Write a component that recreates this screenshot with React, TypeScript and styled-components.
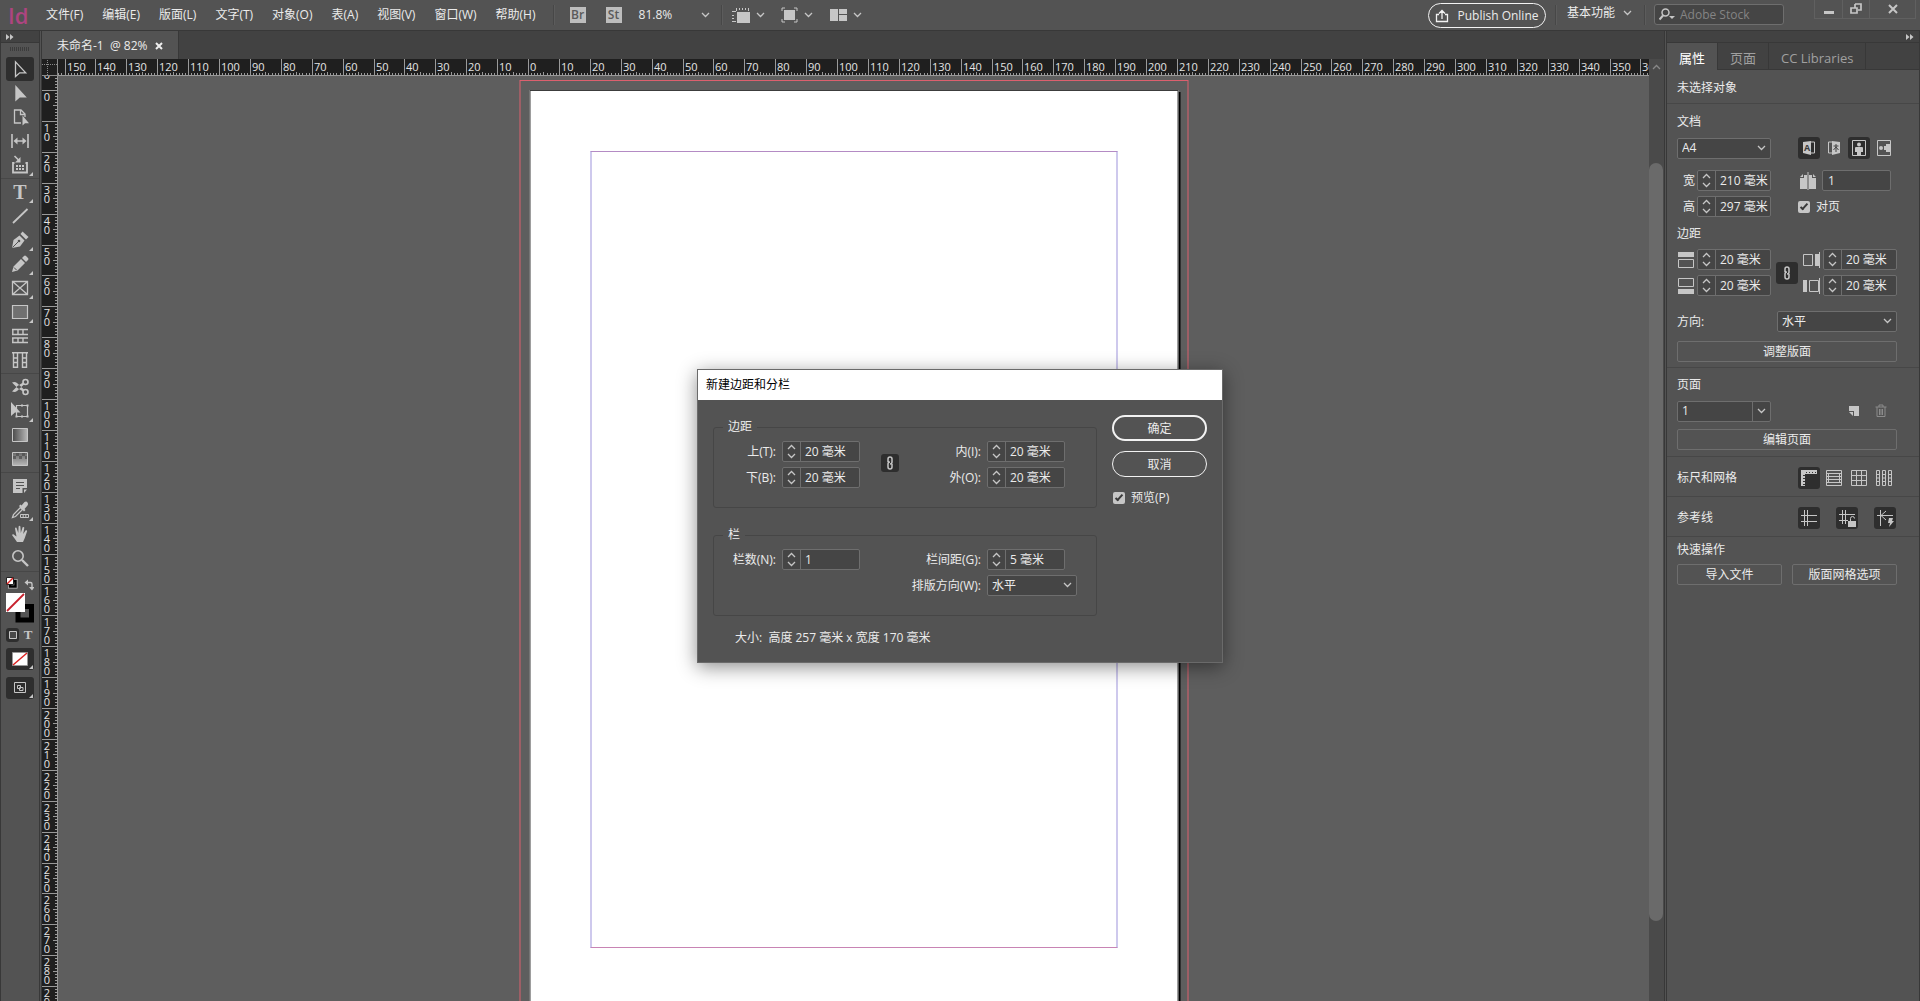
import React, { useLayoutEffect, useRef, useState } from 'react';
import styled, { createGlobalStyle, css } from 'styled-components';

const color = {
  bar: '#535353',
  dark: '#424242',
  line: '#474747',
  edge: '#383838',
  field: '#454545',
  border: '#6e6e6e',
  pressed: '#2e2e2e',
  icon: '#c6c6c6',
  text: '#ebebeb',
  ruler: '#1f1f1f',
  tick: '#9a9a9a',
};

const MM = 3.09;

const GlobalStyle = createGlobalStyle`
  *, *::before, *::after { box-sizing: border-box; }
  body {
    margin: 0;
    background: #5e5e5e;
    color: ${color.text};
    font: 12px/18px "Open Sans", "Noto Sans CJK SC", sans-serif;
  }
  button, input, select { font: inherit; color: inherit; margin: 0; }
  button { padding: 0; border: 0; background: none; }
  svg { display: block; flex: none; }
`;

const Frame = styled.div`
  display: flex;
  flex-direction: column;
  height: 100vh;
  overflow: hidden;
  position: relative;
`;

/* ---------- top bar ---------- */

const TopBar = styled.header`
  display: flex;
  align-items: center;
  height: 31px;
  flex: none;
  background: ${color.bar};
  border-bottom: 1px solid ${color.edge};
`;

const Logo = styled.span`
  width: 38px;
  padding-left: 8px;
  color: #ad4580;
  font-size: 22px;
  line-height: 28px;
  font-weight: 600;
`;

const Menu = styled.nav`
  display: flex;
  gap: 19px;
  padding: 0 17px 0 8px;
`;

const MenuButton = styled.button`
  white-space: nowrap;
`;

const Divider = styled.span`
  width: 1px;
  height: 20px;
  background: #474747;
  border-right: 1px solid #5c5c5c;
  box-sizing: content-box;
`;

const Tools = styled.div`
  display: flex;
  align-items: center;
  gap: 20px;
  padding: 0 11px 0 15px;
`;

const AppBadge = styled.button`
  width: 16px;
  height: 16px;
  background: #bdbdbd;
  color: #5a5a5a;
  font-weight: 600;
  line-height: 16px;
`;

const Zoom = styled.button`
  display: flex;
  align-items: center;
  gap: 29px;
  font-size: 12px;
  margin-left: -3px;
`;

const ViewTools = styled.div`
  display: flex;
  align-items: center;
  gap: 16px;
  padding-left: 8px;
`;

const ViewButton = styled.button`
  display: flex;
  align-items: center;
  gap: 6px;
`;

const BarEnd = styled.div`
  display: flex;
  align-items: center;
  margin-left: auto;
  height: 100%;
`;

const Publish = styled.button`
  display: flex;
  align-items: center;
  justify-content: center;
  gap: 8px;
  width: 118px;
  height: 25px;
  margin-right: 9px;
  padding-top: 2px;
  border: 1px solid #f2f2f2;
  border-radius: 13px;
`;

const Workspace = styled.button`
  display: flex;
  align-items: center;
  gap: 8px;
  padding: 0 12px 4px 10px;
`;

const Search = styled.label`
  display: flex;
  align-items: center;
  gap: 4px;
  width: 130px;
  height: 21px;
  margin: 0 30px 2px 8px;
  padding: 1px 4px 0;
  background: ${color.field};
  border: 1px solid ${color.border};
  border-radius: 3px;
  input {
    width: 80px;
    padding: 0;
    border: 0;
    background: none;
    outline: none;
  }
  input::placeholder { color: #848484; }
`;

const WindowButtons = styled.div`
  display: flex;
  align-self: flex-start;
  height: 19px;
  margin-right: 4px;
  border: 1px solid #606060;
  border-top: 0;
`;

const WindowButton = styled.button<{ $wide?: boolean }>`
  display: grid;
  place-items: center;
  width: ${(p) => (p.$wide ? 46 : 27)}px;
  & + & { border-left: 1px solid #606060; }
`;

/* ---------- work area ---------- */

const Body = styled.div`
  display: flex;
  flex: 1;
  min-height: 0;
`;

const ToolPanel = styled.aside`
  display: flex;
  flex-direction: column;
  align-items: stretch;
  width: 42px;
  flex: none;
  background: ${color.bar};
  border-left: 1px solid ${color.edge};
  border-right: 3px double ${color.edge};
`;

const Strip = styled.div<{ $end?: boolean }>`
  display: flex;
  align-items: center;
  justify-content: ${(p) => (p.$end ? 'flex-end' : 'flex-start')};
  height: 12px;
  flex: none;
  padding: 0 5px;
  background: ${color.dark};
  border-bottom: 1px solid ${color.edge};
`;

const Grip = styled.div`
  width: 20px;
  height: 4px;
  margin: 4px auto 6px;
  background: repeating-linear-gradient(90deg, #3c3c3c 0 1px, transparent 1px 2px);
`;

const ToolGroup = styled.div`
  display: flex;
  flex-direction: column;
  align-items: center;
  & + & {
    border-top: 1px solid ${color.line};
    margin-top: 1px;
    padding-top: 1px;
  }
`;

const pressed = css`
  background: ${color.pressed};
  border-radius: 3px;
`;

const ToolButton = styled.button<{ $on?: boolean; $more?: boolean }>`
  position: relative;
  display: grid;
  place-items: center;
  width: 28px;
  height: 24px;
  ${(p) => p.$on && pressed}
  ${(p) =>
    p.$more &&
    css`
      &::after {
        content: '';
        position: absolute;
        right: 1px;
        bottom: 1px;
        border: 2px solid transparent;
        border-right-color: ${color.icon};
        border-bottom-color: ${color.icon};
      }
    `}
`;

const Swatches = styled.div`
  display: flex;
  flex-direction: column;
  align-items: center;
  margin-top: 1px;
  padding-top: 5px;
  border-top: 1px solid ${color.line};
`;

const ModeRow = styled.div`
  display: flex;
  gap: 2px;
  width: 28px;
  margin: 5px 0 6px;
`;

const ModeButton = styled.button<{ $on?: boolean }>`
  display: grid;
  place-items: center;
  width: 14px;
  height: 14px;
  ${(p) => p.$on && pressed}
`;

const StackedTool = styled(ToolButton)`
  height: 22px;
  margin-bottom: 7px;
`;

const Center = styled.main`
  display: flex;
  flex-direction: column;
  flex: 1;
  min-width: 0;
`;

const TabBar = styled.div`
  display: flex;
  height: 28px;
  flex: none;
  background: ${color.dark};
`;

const DocTab = styled.div`
  display: flex;
  align-items: center;
  gap: 8px;
  padding: 1px 15px 0;
  background: ${color.bar};
  border-right: 1px solid ${color.edge};
  white-space: pre;
`;

const Workbench = styled.div`
  display: flex;
  flex: 1;
  min-height: 0;
`;

const RuledArea = styled.div`
  display: grid;
  grid-template: 17px minmax(0, 1fr) / 16px minmax(0, 1fr);
  flex: 1;
  min-width: 0;
`;

const RulerBox = styled.div`
  overflow: hidden;
  min-height: 0;
  background: ${color.ruler};
  svg { width: 100%; height: 100%; }
  text { fill: #e4e4e4; font-size: 11px; }
`;

const Pasteboard = styled.div`
  position: relative;
  overflow: hidden;
  background: #5e5e5e;
`;

const Bleed = styled.div`
  position: absolute;
  left: 50%;
  top: 4px;
  width: 669px;
  height: 939px;
  transform: translateX(-50%);
  padding: 9px;
  border: 1px solid #dc606e;
`;

const Page = styled.div`
  height: 100%;
  padding: 60px;
  background: #fff;
  border: 1px solid #3c3c3c;
  box-shadow: 2px 2px 0 #000;
`;

const Margins = styled.div`
  height: 100%;
  border: 1px solid #9d94dc;
  border-top-color: #b48bc4;
  border-bottom-color: #c884b4;
`;

const ScrollTrack = styled.div`
  display: flex;
  flex-direction: column;
  width: 15px;
  flex: none;
  background: #4a4a4a;
`;

const ScrollArrow = styled.button`
  display: grid;
  place-items: center;
  height: 16px;
  opacity: 0.5;
`;

const ScrollSpace = styled.div<{ $share: number }>`
  flex: ${(p) => p.$share};
`;

const ScrollThumb = styled(ScrollSpace)`
  width: 14px;
  background: #6a6a6a;
  border-radius: 7px;
`;

/* ---------- form parts ---------- */

const fieldBox = css`
  height: 21px;
  background: ${color.field};
  border: 1px solid ${color.border};
  border-radius: 2px;
`;

const SpinBox = styled.span<{ $width: number }>`
  display: flex;
  width: ${(p) => p.$width}px;
  ${fieldBox}
  input {
    flex: 1;
    min-width: 0;
    padding: 0 0 0 4px;
    border: 0;
    background: none;
    outline: none;
  }
`;

const SpinArrows = styled.span`
  display: flex;
  flex-direction: column;
  width: 18px;
  border-right: 1px solid ${color.border};
  button {
    display: grid;
    place-items: center;
    flex: 1;
  }
`;

const TextInput = styled.input`
  ${fieldBox}
  width: 69px;
  padding: 0 5px;
`;

const SelectBox = styled.span<{ $width: number; $split?: boolean }>`
  position: relative;
  display: block;
  width: ${(p) => p.$width}px;
  select {
    ${fieldBox}
    display: block;
    width: 100%;
    padding: 0 4px;
    appearance: none;
    outline: none;
  }
  svg {
    position: absolute;
    right: 5px;
    top: 7px;
    pointer-events: none;
  }
  ${(p) =>
    p.$split &&
    css`
      &::after {
        content: '';
        position: absolute;
        top: 1px;
        bottom: 1px;
        right: 18px;
        border-left: 1px solid ${color.border};
      }
    `}
`;

const CheckLabel = styled.label`
  display: flex;
  align-items: center;
  gap: 6px;
  input {
    appearance: none;
    display: grid;
    place-items: center;
    width: 12px;
    height: 12px;
    background: ${color.icon};
    border-radius: 2px;
  }
  input:checked::after {
    content: '';
    width: 4px;
    height: 8px;
    margin-bottom: 2px;
    border: solid #3a3a3a;
    border-width: 0 2px 2px 0;
    transform: rotate(42deg);
  }
`;

const PanelButton = styled.button`
  flex: 1;
  height: 21px;
  border: 1px solid ${color.border};
  border-radius: 2px;
`;

const Toggle = styled.button<{ $on?: boolean; $small?: boolean }>`
  display: grid;
  place-items: center;
  width: ${(p) => (p.$small ? 18 : 22)}px;
  height: ${(p) => (p.$small ? 18 : 22)}px;
  ${(p) => p.$on && pressed}
`;

/* ---------- properties panel ---------- */

const SidePanel = styled.aside`
  width: 256px;
  flex: none;
  background: ${color.bar};
  border-left: 3px double ${color.edge};
  border-right: 1px solid ${color.edge};
`;

const PanelTabs = styled.div`
  display: flex;
  height: 27px;
  background: ${color.dark};
  box-shadow: inset 0 -1px ${color.edge};
`;

const PanelTab = styled.button<{ $on?: boolean }>`
  padding: 2px 12px 0;
  font-size: 13px;
  border-right: 1px solid ${color.edge};
  color: ${(p) => (p.$on ? '#fff' : '#a0a0a0')};
  background: ${(p) => (p.$on ? color.bar : 'transparent')};
`;

const Section = styled.section<{ $top: number; $bottom: number }>`
  display: flex;
  flex-direction: column;
  padding: ${(p) => p.$top}px 22px ${(p) => p.$bottom}px 10px;
  border-bottom: 1px solid ${color.line};
  &:last-child { border-bottom: 0; }
`;

const Heading = styled.h2`
  margin: 0;
  font-size: 12px;
  font-weight: 400;
  line-height: 18px;
`;

const Row = styled.div<{ $top?: number; $gap?: number }>`
  display: flex;
  align-items: center;
  justify-content: space-between;
  gap: ${(p) => p.$gap ?? 0}px;
  min-height: 21px;
  margin-top: ${(p) => p.$top ?? 0}px;
`;

const ToggleRow = styled(Row)`
  height: 22px;
`;

const Pair = styled.div`
  display: flex;
  align-items: center;
  justify-content: space-between;
  width: 94px;
`;

const Rest = styled.div<{ $gap: number }>`
  display: flex;
  align-items: center;
  gap: ${(p) => p.$gap}px;
  width: 99px;
`;

const RowLabel = styled.label`
  padding-left: 6px;
`;

const Stack = styled.div`
  display: flex;
  flex-direction: column;
  gap: 5px;
`;

/* ---------- dialog ---------- */

const Overlay = styled.div`
  position: absolute;
  inset: 31px 0 0;
  display: grid;
  place-items: center;
`;

const Dialog = styled.form`
  width: 526px;
  background: ${color.bar};
  border: 1px solid #6a6a6a;
  box-shadow: 0 4px 18px rgba(0, 0, 0, 0.45);
`;

const DialogTitle = styled.h1`
  margin: 0;
  height: 30px;
  padding-left: 8px;
  background: #fff;
  color: #000;
  font-size: 12px;
  font-weight: 400;
  line-height: 30px;
`;

const DialogBody = styled.div`
  display: flex;
  gap: 15px;
  padding: 18px 15px 15px;
`;

const DialogFields = styled.div`
  display: flex;
  flex-direction: column;
  gap: 18px;
  flex: 1;
`;

const Group = styled.fieldset`
  margin: 0;
  padding: 5px 19px 19px 0;
  min-height: 90px;
  border: 1px solid #464646;
  border-radius: 3px;
  legend {
    height: 18px;
    margin-left: 9px;
    padding: 0 5px;
  }
`;

const GroupGrid = styled.div`
  display: grid;
  grid-template-columns: 62px 78px 34px 75px 90px;
  column-gap: 6px;
  row-gap: 5px;
  align-items: center;
  > label { justify-self: end; white-space: nowrap; }
`;

const LinkCell = styled.div<{ $rows: number }>`
  grid-row: span ${(p) => p.$rows};
  justify-self: end;
  padding: 0 1px 4px 0;
`;

const Blank = styled.span`
  grid-column: span 3;
`;

const SizeNote = styled.p`
  margin: -5px 0 0 22px;
  white-space: pre;
`;

const DialogActions = styled.div`
  display: flex;
  flex-direction: column;
  gap: 10px;
  width: 95px;
  margin-top: -3px;
  label { padding: 2px 0 0 1px; }
`;

const PillButton = styled.button<{ $primary?: boolean }>`
  height: 26px;
  padding-top: 2px;
  line-height: 20px;
  border: ${(p) => (p.$primary ? 2 : 1)}px solid #f2f2f2;
  border-radius: 13px;
`;

/* ---------- drawings ---------- */

type GlyphProps = { w?: number; h?: number; children: React.ReactNode };

const Glyph = ({ w = 24, h = 24, children }: GlyphProps) => (
  <svg width={w} height={h} viewBox={`0 0 ${w} ${h}`} fill={color.icon} aria-hidden="true">
    {children}
  </svg>
);

const line = { fill: 'none', stroke: color.icon };

const Chevron = ({ up }: { up?: boolean }) => (
  <Glyph w={9} h={6}>
    <path d={up ? 'M1 5l3.5-3.5L8 5' : 'M1 1l3.5 3.5L8 1'} {...line} strokeWidth="1.3" />
  </Glyph>
);

const Chain = () => (
  <Glyph w={10} h={16}>
    <path d="M3 7V4a2 2 0 0 1 4 0v3a2 2 0 0 1-2 2M7 9v3a2 2 0 0 1-4 0V9a2 2 0 0 1 2-2" {...line} strokeWidth="1.5" />
  </Glyph>
);

const DoubleArrow = () => (
  <Glyph w={8} h={6}>
    <path d="M0 0l3.5 3L0 6zM4 0l3.5 3L4 6z" />
  </Glyph>
);

type Tool = { name: string; on?: boolean; more?: boolean; art: React.ReactNode };

const toolGroups: Tool[][] = [
  [
    { name: '选择工具', on: true, art: <path d="M7.5 4.8v14.8l4.2-3.8h6z" {...line} strokeWidth="1.3" /> },
    { name: '直接选择工具', art: <path d="M7.3 4v16.4l4.5-4h7z" /> },
    {
      name: '页面工具',
      art: (
        <>
          <path d="M13 18H6.5V5H13l4 4v3M12.500 5v4.500H17" {...line} strokeWidth="1.3" />
          <path d="M14.500 10.500v10l2.500-2.300h4z" />
        </>
      ),
    },
    {
      name: '间隙工具',
      art: (
        <>
          <path d="M4 5v14M20 5v14" {...line} strokeWidth="1.600" />
          <path d="M7 12h10" {...line} strokeWidth="1.500" />
          <path d="M5.500 12l4-3.500v7zM18.500 12l-4-3.500v7z" />
        </>
      ),
    },
    {
      name: '内容收集器工具',
      more: true,
      art: (
        <>
          <path d="M6.500 10H5v9.500h14V10h-1.500" {...line} strokeWidth="1.800" />
          <path d="M8 12h2v2H8zm3 0h2v2h-2zm3 0h2v2h-2zM8 15h2v2H8zm3 0h2v2h-2zm3 0h2v2h-2z" />
          <path d="M6.500 3l4 4" {...line} strokeWidth="1.600" />
          <path d="M12.500 9.500H7l5.500-5.500z" />
        </>
      ),
    },
  ],
  [
    {
      name: '文字工具',
      more: true,
      art: (
        <text x="12" y="18.500" textAnchor="middle" fontFamily="Liberation Serif, serif" fontWeight="700" fontSize="20">
          T
        </text>
      ),
    },
    { name: '直线工具', art: <path d="M5 19L19.500 5" {...line} strokeWidth="1.800" /> },
    {
      name: '钢笔工具',
      more: true,
      art: (
        <>
          <path d="M4 20l1.500-8 6-4.500 5 5-4.500 6z" />
          <path d="M12.500 6l2-2.500 6 5.500-2.500 2.500z" />
          <path d="M4.500 19.500l6-6" stroke={color.bar} strokeWidth="1" />
          <circle cx="11" cy="13" r="1.300" fill={color.bar} />
        </>
      ),
    },
    {
      name: '铅笔工具',
      more: true,
      art: (
        <>
          <path d="M4 20l1.500-5.500L13 7l4 4-7.500 7.500zM14 6l2-2q1-1 2 0l2 2q1 1 0 2l-2 2z" />
          <path d="M6 15.500l2.500 2.500" stroke={color.bar} strokeWidth="1" />
        </>
      ),
    },
    { name: '矩形框架工具', more: true, art: <path d="M4.500 5.500h15v13h-15zl15 13m0-13l-15 13" {...line} strokeWidth="1.300" /> },
    { name: '矩形工具', more: true, art: <path d="M4.500 5.500h15v13h-15z" {...line} fill="#707070" strokeWidth="1.200" /> },
    {
      name: '水平网格工具',
      art: <path d="M4 5.500h16M4 10.500h16M4 14h16M4 18.500h16M4.800 5v6M10 5v6M15 5v6M4.800 14v5M10 14v5M15 14v5" {...line} strokeWidth="1.400" />,
    },
    {
      name: '垂直网格工具',
      art: <path d="M4 4.800h16M5.500 4v16M9.500 4v16M14.500 4v16M18.500 4v16M5.500 10h4M5.500 14.500h4M5.500 19.300h4M14.500 10h4M14.500 14.500h4M14.500 19.300h4" {...line} strokeWidth="1.400" />,
    },
  ],
  [
    {
      name: '剪刀工具',
      art: (
        <>
          <circle cx="17.500" cy="7" r="2.500" {...line} strokeWidth="1.600" />
          <circle cx="17.500" cy="17" r="2.500" {...line} strokeWidth="1.600" />
          <path d="M4 7.500q3-1 5 .5l7 6.500-1 2L9.500 13zM4 16.500q3 1 5-.5l7-6.500-1-2L9.500 11z" />
        </>
      ),
    },
    {
      name: '自由变换工具',
      more: true,
      art: (
        <>
          <path d="M8.500 6.500h11v11h-11z" {...line} strokeWidth="1.200" />
          <path d="M18.500 5.500h2v2h-2zM18.500 16.500h2v2h-2zM7.500 16.500h2v2h-2zM13 5.500h2v2h-2zM13 16.500h2v2h-2z" />
          <path d="M3 3v14l4-3.500h5.500z" />
        </>
      ),
    },
    { name: '渐变色板工具', art: <path d="M4.500 5.500h15v13h-15z" fill="url(#swatch)" stroke={color.icon} /> },
    {
      name: '渐变羽化工具',
      art: (
        <>
          <path d="M4.500 5.500h15v13h-15z" fill="url(#feather)" stroke={color.icon} />
          <path d="M8 6h3v3H8zm6 0h3v3h-3zM5 9h3v3H5zm6 0h3v3h-3zm6 0h2v3h-2z" fill="#4c4c4c" opacity=".7" />
        </>
      ),
    },
  ],
  [
    {
      name: '附注工具',
      art: (
        <>
          <path d="M5 5h14v9h-4.500v5H5zM16 15.500h3l-3 3.500z" />
          <path d="M8 8.500h8M8 11.500h8M8 14.500h4" stroke={color.bar} strokeWidth="1.200" />
        </>
      ),
    },
    {
      name: '颜色主题工具',
      more: true,
      art: (
        <>
          <path d="M4.500 19.500l1-3 7-7 2 2-7 7z" {...line} strokeWidth="1.300" />
          <path d="M11 8l1.500-1.500 1 1L16.500 4q2-1 3 .5t0 3L16.500 11l1 1L16 13.500z" />
          <path d="M12.500 16.500h8v3h-8zm2.700 0v3m2.600-3v3" {...line} strokeWidth="1" />
        </>
      ),
    },
    {
      name: '抓手工具',
      art: <path d="M9 20q-2-3-5-7 1-1.500 3 .5l1.500 1L7 6.500q.2-1.500 1.500-.8L10.300 11l.3-6.500q1-1.500 1.800 0l.4 6.500 1.800-5.700q1.400-1 1.700.5L15.200 12l2.500-3.700q1.500-.6 1.400.9L16.800 16 15 20z" />,
    },
    {
      name: '缩放显示工具',
      art: (
        <>
          <circle cx="10" cy="10" r="5.200" {...line} strokeWidth="1.600" />
          <path d="M14 14l6 6" {...line} strokeWidth="2.400" />
        </>
      ),
    },
  ],
];

const span = (from: number, to: number) =>
  Array.from({ length: Math.max(0, to - from + 1) }, (_, i) => from + i);

const tickLength = (mm: number, full: number, half: number, short: number) =>
  mm % 10 === 0 ? full : mm % 5 === 0 ? half : short;

/* Rulers only draw the millimetres that are in view. */
const useLength = (axis: 'clientWidth' | 'clientHeight') => {
  const ref = useRef<HTMLDivElement>(null);
  const [length, setLength] = useState(0);
  useLayoutEffect(() => {
    const measure = () => setLength(ref.current ? ref.current[axis] : 0);
    measure();
    window.addEventListener('resize', measure);
    return () => window.removeEventListener('resize', measure);
  }, [axis]);
  return [ref, length] as const;
};

const HorizontalRuler = () => {
  const [ref, width] = useLength('clientWidth');
  const origin = Math.floor(width / 2 - 325);
  const first = Math.ceil(-origin / MM);
  const last = Math.floor((width - origin) / MM);
  return (
    <RulerBox ref={ref}>
      <svg shapeRendering="crispEdges">
        {span(first, last).map((mm) => {
          const len = tickLength(mm, 17, 4, 3);
          return <rect key={mm} x={origin + Math.round(mm * MM)} y={17 - len} width="1" height={len} fill={color.tick} />;
        })}
        {span(Math.ceil(first / 10), Math.floor(last / 10)).map((n) => (
          <text key={n} x={origin + Math.round(n * 10 * MM) + 2} y="12">
            {Math.abs(n * 10)}
          </text>
        ))}
        <rect y="16" width="100%" height="1" fill={color.tick} />
      </svg>
    </RulerBox>
  );
};

const VerticalRuler = () => {
  const [ref, height] = useLength('clientHeight');
  const origin = 14;
  const last = Math.floor((height - origin) / MM);
  return (
    <RulerBox ref={ref}>
      <svg shapeRendering="crispEdges">
        {span(-4, last).map((mm) => {
          const len = tickLength(mm, 16, 5, 3);
          return <rect key={mm} x={16 - len} y={origin + Math.round(mm * MM)} width={len} height="1" fill={color.tick} />;
        })}
        {span(-1, Math.floor(last / 10)).map((n) => (
          <text key={n} textAnchor="middle" y={origin + Math.round(n * 10 * MM) + 11}>
            {String(Math.abs(n * 10))
              .split('')
              .map((digit, i) => (
                <tspan key={i} x="5" dy={i ? 9 : 0}>
                  {digit}
                </tspan>
              ))}
          </text>
        ))}
        <rect x="15" width="1" height="100%" fill={color.tick} />
      </svg>
    </RulerBox>
  );
};

/* ---------- reusable controls ---------- */

const Spin = ({ id, value, width, name }: { id: string; value: string; width: number; name?: string }) => (
  <SpinBox $width={width}>
    <SpinArrows>
      <button type="button" aria-label="增加"><Chevron up /></button>
      <button type="button" aria-label="减少"><Chevron /></button>
    </SpinArrows>
    <input id={id} defaultValue={value} aria-label={name} />
  </SpinBox>
);

const Select = ({ id, value, width, name, split }: { id: string; value: string; width: number; name?: string; split?: boolean }) => (
  <SelectBox $width={width} $split={split}>
    <select id={id} defaultValue={value} aria-label={name}>
      <option>{value}</option>
    </select>
    <Chevron />
  </SelectBox>
);

const MarginField = ({ id, name, art }: { id: string; name: string; art: React.ReactNode }) => (
  <Pair>
    <label htmlFor={id} aria-label={name}>
      <Glyph w={18} h={18}>{art}</Glyph>
    </label>
    <Spin id={id} value="20 毫米" width={74} />
  </Pair>
);

const menus = ['文件(F)', '编辑(E)', '版面(L)', '文字(T)', '对象(O)', '表(A)', '视图(V)', '窗口(W)', '帮助(H)'];

const MenuBar = () => (
  <TopBar>
    <Logo>Id</Logo>
    <Menu>
      {menus.map((m) => (
        <MenuButton key={m}>{m}</MenuButton>
      ))}
    </Menu>
    <Divider />
    <Tools>
      <AppBadge>Br</AppBadge>
      <AppBadge>St</AppBadge>
      <Zoom>81.8% <Chevron /></Zoom>
    </Tools>
    <Divider />
    <ViewTools>
      <ViewButton aria-label="视图选项">
        <Glyph w={19} h={16}>
          <path d="M6 5h13v11H6zM5 1h1v3H5zm3 0h1v2H8zm3 0h1v2h-1zm3 0h1v2h-1zm3 0h1v3h-1zM1 4h4v1H1zm0 4h2v1H1zm0 3h2v1H1zm0 3h4v1H1z" />
        </Glyph>
        <Chevron />
      </ViewButton>
      <ViewButton aria-label="屏幕模式">
        <Glyph w={17} h={16}>
          <path d="M3 3h11v10H3z" />
          <path d="M1 4V1h3M13 1h3v3M16 12v3h-3M4 15H1v-3" {...line} />
        </Glyph>
        <Chevron />
      </ViewButton>
      <ViewButton aria-label="排列文档">
        <Glyph w={18} h={14}>
          <path d="M1 1h8v12H1zM10 1h8v5h-8zM10 7h8v6h-8z" />
        </Glyph>
        <Chevron />
      </ViewButton>
    </ViewTools>
    <BarEnd>
      <Publish>
        <Glyph w={14} h={14}>
          <path d="M4 5.500H1.500v7h11v-7H10M7 10V2M4 4.500l3-3 3 3" {...line} stroke="#f2f2f2" strokeWidth="1.300" />
        </Glyph>
        Publish Online
      </Publish>
      <Divider />
      <Workspace>基本功能 <Chevron /></Workspace>
      <Divider />
      <Search>
        <Glyph w={17} h={14}>
          <circle cx="6.500" cy="4.500" r="3.500" {...line} strokeWidth="1.500" />
          <path d="M4 7.500L.5 11.500" {...line} strokeWidth="2" />
          <path d="M10 8h6l-3 3z" />
        </Glyph>
        <input placeholder="Adobe Stock" aria-label="Adobe Stock" />
      </Search>
      <WindowButtons>
        <WindowButton aria-label="最小化">
          <Glyph w={12} h={12}><path d="M1 8h10v3H1z" /></Glyph>
        </WindowButton>
        <WindowButton aria-label="还原">
          <Glyph w={12} h={12}><path d="M5 1h6v6H8M1 5h6v5H1zM5 1v4" {...line} strokeWidth="1.700" /></Glyph>
        </WindowButton>
        <WindowButton aria-label="关闭" $wide>
          <Glyph w={10} h={10}><path d="M1 1l8 8M9 1L1 9" {...line} strokeWidth="2" /></Glyph>
        </WindowButton>
      </WindowButtons>
    </BarEnd>
  </TopBar>
);

const Toolbox = () => (
  <ToolPanel>
    <Strip><DoubleArrow /></Strip>
    <Grip />
    {toolGroups.map((group) => (
      <ToolGroup key={group[0].name}>
        {group.map((t) => (
          <ToolButton key={t.name} aria-label={t.name} $on={t.on} $more={t.more}>
            <Glyph>
              <defs>
                <linearGradient id="swatch"><stop stopColor="#4a4a4a" /><stop offset="1" stopColor="#b8b8b8" /></linearGradient>
                <linearGradient id="feather" x2="0" y2="1"><stop stopColor="#666" /><stop offset="1" stopColor="#b8b8b8" /></linearGradient>
              </defs>
              {t.art}
            </Glyph>
          </ToolButton>
        ))}
      </ToolGroup>
    ))}
    <Swatches>
      <Glyph w={28} h={46}>
        <path d="M4 4h5.500v5.500H4z" fill="none" stroke={color.icon} strokeWidth="4" />
        <path d="M4 4h5.500v5.500H4z" fill="none" stroke="#000" strokeWidth="2.500" />
        <path d="M.5.500h7v7h-7z" fill="#fff" stroke="#222" />
        <path d="M1 7l6-6" stroke="#d22" strokeWidth="1.500" />
        <path d="M21 5.500h3.500q1.500 0 1.500 1.500V11" {...line} strokeWidth="1.400" />
        <path d="M22 2.500v6l-3.500-3zM23 10h5.500L26 13.500z" />
        <path d="M12 29.500h13.500V43H12z" fill="none" stroke="#000" strokeWidth="5" />
        <path d="M0 16h19v19H0z" fill="#fff" />
        <path d="M1 34l17-17" stroke="#c8202c" strokeWidth="1.800" />
      </Glyph>
      <ModeRow>
        <ModeButton $on aria-label="格式针对容器">
          <Glyph w={10} h={10}><path d="M1.500 1.500h7v7h-7z" {...line} fill="#4a4a4a" /></Glyph>
        </ModeButton>
        <ModeButton aria-label="格式针对文本">
          <Glyph w={12} h={12}>
            <text x="6" y="10" textAnchor="middle" fontFamily="Liberation Serif, serif" fontWeight="700" fontSize="13">T</text>
          </Glyph>
        </ModeButton>
      </ModeRow>
      <StackedTool $on $more aria-label="应用无">
        <Glyph w={16} h={14}>
          <path d="M.5.500h15v13H.5z" fill="#fff" stroke="#999" />
          <path d="M1 13L15 1" stroke="#d22" strokeWidth="1.500" />
        </Glyph>
      </StackedTool>
      <StackedTool $on $more aria-label="屏幕模式">
        <Glyph w={12} h={12}>
          <path d="M.5.500h11v10H.5zM3.500 3.500h3v3h-3zM5.500 5.500h3.500v3H5.500z" {...line} />
        </Glyph>
      </StackedTool>
    </Swatches>
  </ToolPanel>
);

const Properties = () => (
  <SidePanel>
    <Strip $end><DoubleArrow /></Strip>
    <PanelTabs>
      <PanelTab $on>属性</PanelTab>
      <PanelTab>页面</PanelTab>
      <PanelTab>CC Libraries</PanelTab>
    </PanelTabs>
    <Section $top={9} $bottom={6}>
      <Heading>未选择对象</Heading>
    </Section>
    <Section $top={9} $bottom={5}>
      <Heading>文档</Heading>
      <Row $top={6}>
        <Select id="preset" name="页面大小" value="A4" width={94} />
        <Rest $gap={3}>
          <Toggle $on aria-label="从左到右">
            <Glyph w={14} h={16}>
              <path d="M1 2l8-1v14l-8-2z" />
              <path d="M9 2h3.500v11H9" {...line} />
              <text x="5" y="11" textAnchor="middle" fontSize="9" fontWeight="700" fill="#3a3a3a">A</text>
            </Glyph>
          </Toggle>
          <Toggle aria-label="从右到左">
            <Glyph w={14} h={16}>
              <path d="M13 2L5 1v14l8-2z" />
              <path d="M5 2H1.500v11H5" {...line} />
              <path d="M9 4v8M6.500 6h5M9 7l-2.500 3M9 7l2.500 3" stroke="#444" fill="none" />
            </Glyph>
          </Toggle>
          <Toggle $on aria-label="纵向">
            <Glyph w={14} h={16}>
              <path d="M.5.500h13v15H.5z" {...line} />
              <circle cx="7" cy="4.500" r="2" />
              <path d="M3 8q0-1 1-1h6q1 0 1 1v4H9v3H5v-3H3z" />
            </Glyph>
          </Toggle>
          <Toggle aria-label="横向">
            <Glyph w={14} h={16}>
              <path d="M.5.500h13v15H.5z" {...line} />
              <circle cx="4" cy="8" r="2" />
              <path d="M13 4H9v2H7v4h2v2h4z" />
            </Glyph>
          </Toggle>
        </Rest>
      </Row>
      <Row $top={11}>
        <Pair>
          <RowLabel htmlFor="width">宽</RowLabel>
          <Spin id="width" value="210 毫米" width={74} />
        </Pair>
        <Rest $gap={5}>
          <Glyph w={19} h={18}>
            <path d="M2 6h4v-3h3v14H2zM11 3h3v3h4v11h-7zM2 5l3-3v3zM18 5l-3-3v3z" />
            <path d="M10 0v18" {...line} />
          </Glyph>
          <TextInput defaultValue="1" aria-label="页数" />
        </Rest>
      </Row>
      <Row $top={5}>
        <Pair>
          <RowLabel htmlFor="height">高</RowLabel>
          <Spin id="height" value="297 毫米" width={74} />
        </Pair>
        <Rest $gap={0}>
          <CheckLabel><input type="checkbox" defaultChecked />对页</CheckLabel>
        </Rest>
      </Row>
      <Row $top={6}><Heading>边距</Heading></Row>
      <Row $top={5} $gap={5}>
        <Stack>
          <MarginField id="m-top" name="上边距" art={<><path d="M1 1h16v5H1z" /><path d="M1.500 8.500h15v8h-15z" {...line} /></>} />
          <MarginField id="m-bottom" name="下边距" art={<><path d="M1 12h16v5H1z" /><path d="M1.500 1.500h15v8h-15z" {...line} /></>} />
        </Stack>
        <Toggle $on aria-label="将所有设置设为相同"><Chain /></Toggle>
        <Stack>
          <MarginField id="m-in" name="内边距" art={<><path d="M12 3h4v12h-4z" /><path d="M.5 3.500h9v11h-9zM16.500 1v16" {...line} /></>} />
          <MarginField id="m-out" name="外边距" art={<><path d="M0 3h4v12H0z" /><path d="M6.500 3.500h9v11h-9zM16.500 1v16" {...line} /></>} />
        </Stack>
      </Row>
      <Row $top={15}>
        <label htmlFor="direction">方向:</label>
        <Select id="direction" value="水平" width={120} />
      </Row>
      <Row $top={9}><PanelButton>调整版面</PanelButton></Row>
    </Section>
    <Section $top={8} $bottom={6}>
      <Heading>页面</Heading>
      <Row $top={6}>
        <Select id="page" name="页面" value="1" width={94} split />
        <Rest $gap={5}>
          <ScrollSpace $share={1} />
          <Toggle aria-label="新建页面">
            <Glyph w={12} h={12}><path d="M1 1h10v10H6V6H1zM1 7h4v4z" /></Glyph>
          </Toggle>
          <Toggle aria-label="删除页面">
            <Glyph w={12} h={14}>
              <path d="M.5 3h11M4 3V1h4v2M2 3v9.500h8V3M4.500 5v6M6 5v6M7.500 5v6" {...line} stroke="#8c8c8c" />
            </Glyph>
          </Toggle>
          <span />
        </Rest>
      </Row>
      <Row $top={7}><PanelButton>编辑页面</PanelButton></Row>
    </Section>
    <Section $top={10} $bottom={7}>
      <ToggleRow>
        <Heading>标尺和网格</Heading>
        <Rest $gap={3}>
          <Toggle $on aria-label="显示标尺">
            <Glyph w={16} h={16}>
              <path d="M0 0h16v4H4v12H0z" />
              <path d="M5 2.500h1M8 2.500h1M11 2.500h1M14 2.500h1M2 5.500h2M2 8.500h2M2 11.500h2M2 14.500h2" stroke="#333" />
            </Glyph>
          </Toggle>
          <Toggle aria-label="显示基线网格">
            <Glyph w={16} h={16}><path d="M.5.500h15v15H.5zM0 3.500h16M0 6.500h16M0 9.500h16M0 12.500h16M2.500 3v10M13.500 3v10" {...line} /></Glyph>
          </Toggle>
          <Toggle aria-label="显示文档网格">
            <Glyph w={16} h={16}><path d="M.5.500h15v15H.5zM5.500 0v16M10.500 0v16M0 5.500h16M0 10.500h16" {...line} /></Glyph>
          </Toggle>
          <Toggle aria-label="显示版面网格">
            <Glyph w={16} h={16}>
              <path d="M.5.500h3v15h-3zM6.500.500h3v15h-3zM12.500.500h3v15h-3zM.5 4.500h3M.5 8h3M.5 11.500h3M6.500 4.500h3M6.500 8h3M6.500 11.500h3M12.500 4.500h3M12.500 8h3M12.500 11.500h3" {...line} />
            </Glyph>
          </Toggle>
        </Rest>
      </ToggleRow>
    </Section>
    <Section $top={10} $bottom={7}>
      <ToggleRow>
        <Heading>参考线</Heading>
        <Rest $gap={16}>
          <Toggle $on aria-label="显示参考线">
            <Glyph w={16} h={16}><path d="M3.500 0v16M6.500 0v16M0 5.500h16M0 11.500h16" {...line} /></Glyph>
          </Toggle>
          <Toggle $on aria-label="锁定参考线">
            <Glyph w={18} h={18}>
              <path d="M4.500 1v14M7.500 1v14M1 5.500h16M1 11.500h9" {...line} />
              <path d="M10 12h8v6h-8z" />
              <path d="M12.500 12v-2.500a2 2 0 0 1 4 0" {...line} />
            </Glyph>
          </Toggle>
          <Toggle $on aria-label="显示智能参考线">
            <Glyph w={18} h={18}>
              <path d="M4.500 1v16M1 6.500h16M10 2L5 6.500l5 4.500" {...line} />
              <path d="M13 9h4l-1 3h2l-5 6 1-4h-2z" />
            </Glyph>
          </Toggle>
        </Rest>
      </ToggleRow>
    </Section>
    <Section $top={4} $bottom={0}>
      <Heading>快速操作</Heading>
      <Row $top={5} $gap={10}>
        <PanelButton>导入文件</PanelButton>
        <PanelButton>版面网格选项</PanelButton>
      </Row>
    </Section>
  </SidePanel>
);

const MarginsDialog = () => (
  <Overlay>
    <Dialog role="dialog" aria-labelledby="dialog-title" onSubmit={(e) => e.preventDefault()}>
      <DialogTitle id="dialog-title">新建边距和分栏</DialogTitle>
      <DialogBody>
        <DialogFields>
          <Group>
            <legend>边距</legend>
            <GroupGrid>
              <label htmlFor="d-top">上(T):</label>
              <Spin id="d-top" value="20 毫米" width={78} />
              <LinkCell $rows={2}>
                <Toggle $on $small type="button" aria-label="将所有设置设为相同"><Chain /></Toggle>
              </LinkCell>
              <label htmlFor="d-in">内(I):</label>
              <Spin id="d-in" value="20 毫米" width={78} />
              <label htmlFor="d-bottom">下(B):</label>
              <Spin id="d-bottom" value="20 毫米" width={78} />
              <label htmlFor="d-out">外(O):</label>
              <Spin id="d-out" value="20 毫米" width={78} />
            </GroupGrid>
          </Group>
          <Group>
            <legend>栏</legend>
            <GroupGrid>
              <label htmlFor="d-count">栏数(N):</label>
              <Spin id="d-count" value="1" width={78} />
              <span />
              <label htmlFor="d-gutter">栏间距(G):</label>
              <Spin id="d-gutter" value="5 毫米" width={78} />
              <Blank />
              <label htmlFor="d-flow">排版方向(W):</label>
              <Select id="d-flow" value="水平" width={90} />
            </GroupGrid>
          </Group>
          <SizeNote>{'大小:  高度 257 毫米 x 宽度 170 毫米'}</SizeNote>
        </DialogFields>
        <DialogActions>
          <PillButton $primary type="submit">确定</PillButton>
          <PillButton type="button">取消</PillButton>
          <CheckLabel><input type="checkbox" defaultChecked />预览(P)</CheckLabel>
        </DialogActions>
      </DialogBody>
    </Dialog>
  </Overlay>
);

export default function App() {
  return (
    <Frame>
      <GlobalStyle />
      <MenuBar />
      <Body>
        <Toolbox />
        <Center>
          <TabBar>
            <DocTab>
              {'未命名-1  @ 82%'}
              <button aria-label="关闭文档">
                <Glyph w={8} h={8}><path d="M1 1l6 6M7 1L1 7" {...line} stroke="#eee" strokeWidth="2" /></Glyph>
              </button>
            </DocTab>
          </TabBar>
          <Workbench>
            <RuledArea>
              <RulerBox>
                <Glyph w={16} h={17}>
                  <path d="M5.500 1v15M0 5.500h15" {...line} stroke="#8a8a8a" strokeDasharray="1 1" />
                  <path d="M15.500 0v17M0 16.500h16" {...line} stroke="#8a8a8a" />
                </Glyph>
              </RulerBox>
              <HorizontalRuler />
              <VerticalRuler />
              <Pasteboard>
                <Bleed><Page><Margins /></Page></Bleed>
              </Pasteboard>
            </RuledArea>
            <ScrollTrack>
              <ScrollArrow aria-label="向上滚动"><Chevron up /></ScrollArrow>
              <ScrollSpace $share={88} />
              <ScrollThumb $share={758} />
              <ScrollSpace $share={80} />
            </ScrollTrack>
          </Workbench>
        </Center>
        <Properties />
      </Body>
      <MarginsDialog />
    </Frame>
  );
}
